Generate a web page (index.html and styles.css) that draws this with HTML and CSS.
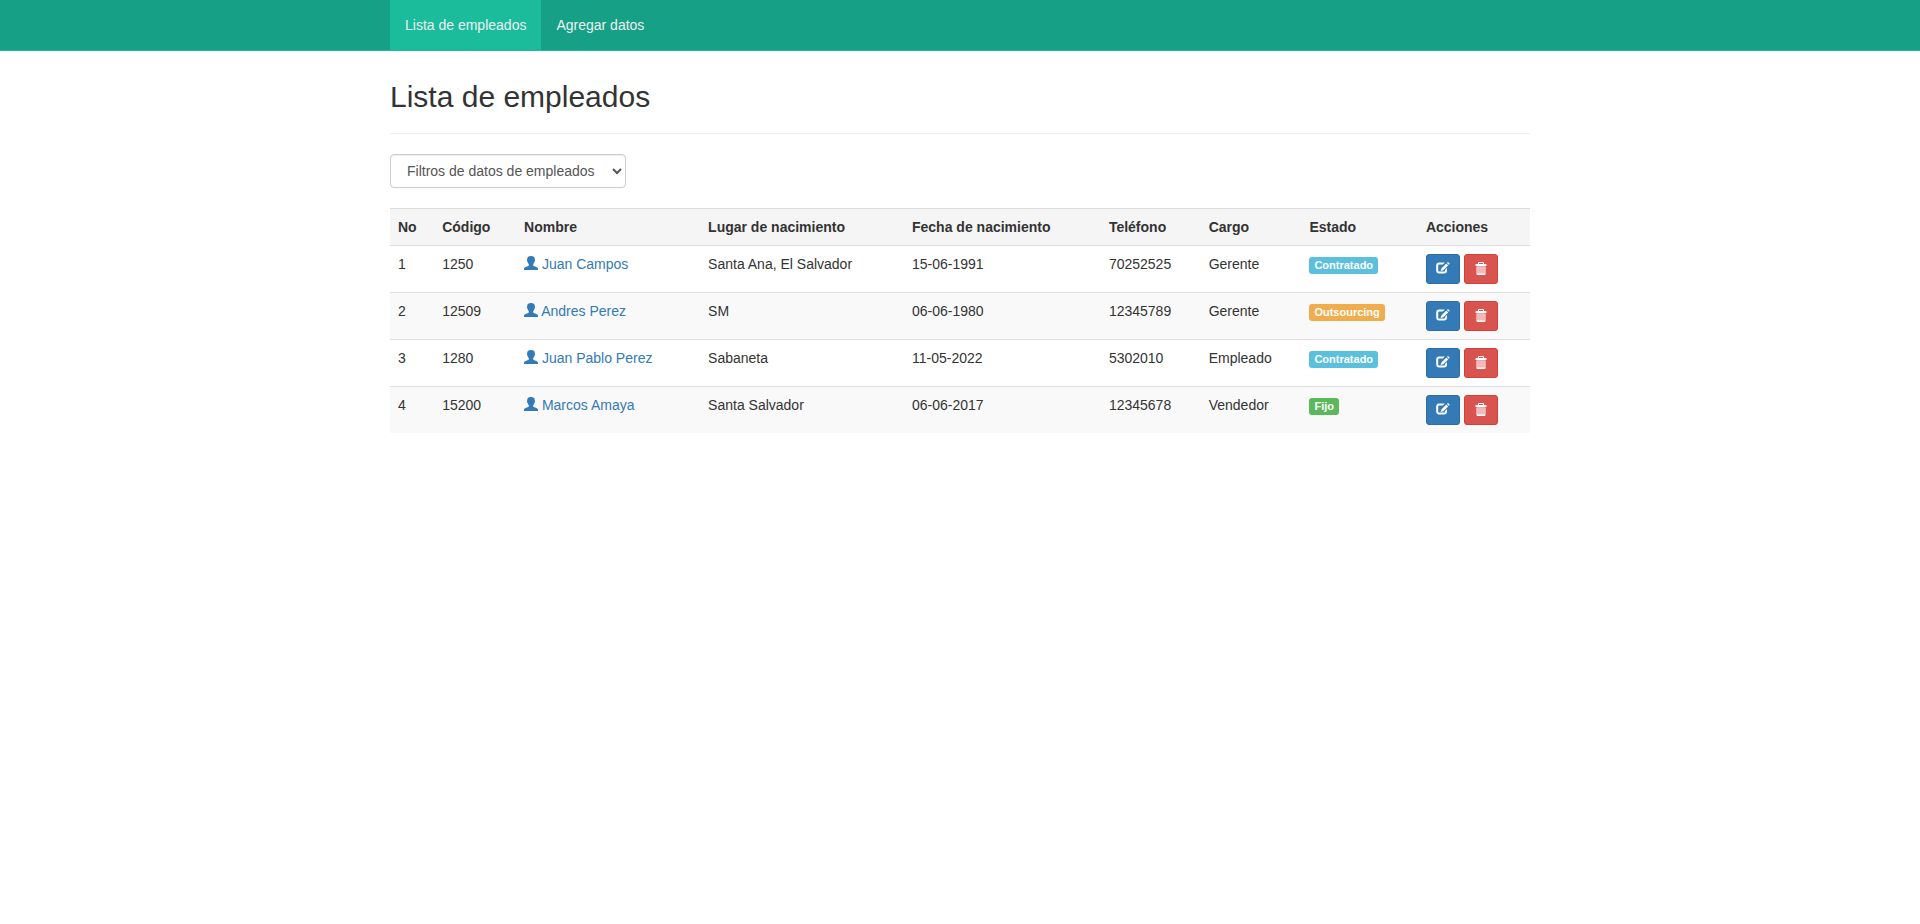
FILE: index.html
```html
<!DOCTYPE html>
<html lang="es">
<head>
<meta charset="utf-8">
<meta name="viewport" content="width=device-width, initial-scale=1">
<title>Lista de empleados</title>
<link rel="stylesheet" href="styles.css">
</head>
<body>
<svg class="sprite" aria-hidden="true">
  <symbol id="user" viewBox="0 0 14 14">
    <path d="M7 0C4.500 0 3.200 1.200 3.200 3.200c0 .6-.3.9-.2 1.500.1.7.5.8.6 1.300.2.900.6 1.500 1.200 2v1.500c-.2.5-.9.8-1.900 1.100C1.200 11.100 0 11.700 0 12.800V14h14v-1.200c0-1.100-1.200-1.700-2.900-2.200-1-.3-1.700-.6-1.900-1.100V8c.6-.5 1-1.100 1.200-2 .1-.5.5-.6.6-1.300.1-.6-.2-.9-.2-1.500C10.800 1.200 9.500 0 7 0z"/>
  </symbol>
  <symbol id="edit" viewBox="0 0 14 12">
    <path d="M8.800.5H3.200A3 3 0 0 0 .2 3.500v5a3 3 0 0 0 3 3H8a3 3 0 0 0 3-3V6L9 8v.7c0 .5-.4.9-.9.9H3.100c-.5 0-.9-.4-.9-.9V3.400c0-.5.4-.9.900-.9h3.700z"/>
    <path d="M12 0 13.800 1.800 12.800 2.800 11 1zM10.300 1.600 12.200 3.500 7.300 8.300 4.600 9.100 5.400 6.400z"/>
  </symbol>
  <symbol id="trash" viewBox="0 0 12 13">
    <path fill-rule="evenodd" d="M4 0h4a1 1 0 0 1 1 1v1h2a.5.5 0 0 1 .5.5V4H.5V2.500A.5.5 0 0 1 1 2h2V1a1 1 0 0 1 1-1zM4 1v1h4V1z"/>
    <path fill-rule="evenodd" d="M1.500 4.500h9V12a1 1 0 0 1-1 1h-7a1 1 0 0 1-1-1zM2.600 5v6.500h.8V5zM4.600 5v6.500h.8V5zM6.600 5v6.500h.8V5zM8.600 5v6.500h.8V5z"/>
  </symbol>
</svg>

<nav class="navbar">
  <div class="container">
    <ul class="nav">
      <li><a class="nav-link active" href="#lista">Lista de empleados</a></li>
      <li><a class="nav-link" href="#agregar">Agregar datos</a></li>
    </ul>
  </div>
</nav>

<main class="container content">
  <h2>Lista de empleados</h2>
  <hr>
  <form class="filter">
    <select class="form-control" aria-label="Filtros de datos de empleados">
      <option>Filtros de datos de empleados</option>
    </select>
  </form>
  <table class="table">
    <thead>
      <tr><th>No</th><th>Código</th><th>Nombre</th><th>Lugar de nacimiento</th><th>Fecha de nacimiento</th><th>Teléfono</th><th>Cargo</th><th>Estado</th><th>Acciones</th></tr>
    </thead>
    <tbody>
      <tr>
        <td>1</td><td>1250</td>
        <td><a href="#1250"><svg class="icon-user"><use href="#user"/></svg> Juan Campos</a></td>
        <td>Santa Ana, El Salvador</td><td>15-06-1991</td><td>70252525</td><td>Gerente</td>
        <td><span class="label info">Contratado</span></td>
        <td>
          <button class="btn primary" type="button" aria-label="Editar"><svg class="icon-edit"><use href="#edit"/></svg></button>
          <button class="btn danger" type="button" aria-label="Eliminar"><svg class="icon-trash"><use href="#trash"/></svg></button>
        </td>
      </tr>
      <tr>
        <td>2</td><td>12509</td>
        <td><a href="#12509"><svg class="icon-user"><use href="#user"/></svg> Andres Perez</a></td>
        <td>SM</td><td>06-06-1980</td><td>12345789</td><td>Gerente</td>
        <td><span class="label warning">Outsourcing</span></td>
        <td>
          <button class="btn primary" type="button" aria-label="Editar"><svg class="icon-edit"><use href="#edit"/></svg></button>
          <button class="btn danger" type="button" aria-label="Eliminar"><svg class="icon-trash"><use href="#trash"/></svg></button>
        </td>
      </tr>
      <tr>
        <td>3</td><td>1280</td>
        <td><a href="#1280"><svg class="icon-user"><use href="#user"/></svg> Juan Pablo Perez</a></td>
        <td>Sabaneta</td><td>11-05-2022</td><td>5302010</td><td>Empleado</td>
        <td><span class="label info">Contratado</span></td>
        <td>
          <button class="btn primary" type="button" aria-label="Editar"><svg class="icon-edit"><use href="#edit"/></svg></button>
          <button class="btn danger" type="button" aria-label="Eliminar"><svg class="icon-trash"><use href="#trash"/></svg></button>
        </td>
      </tr>
      <tr>
        <td>4</td><td>15200</td>
        <td><a href="#15200"><svg class="icon-user"><use href="#user"/></svg> Marcos Amaya</a></td>
        <td>Santa Salvador</td><td>06-06-2017</td><td>12345678</td><td>Vendedor</td>
        <td><span class="label success">Fijo</span></td>
        <td>
          <button class="btn primary" type="button" aria-label="Editar"><svg class="icon-edit"><use href="#edit"/></svg></button>
          <button class="btn danger" type="button" aria-label="Eliminar"><svg class="icon-trash"><use href="#trash"/></svg></button>
        </td>
      </tr>
    </tbody>
  </table>
</main>
</body>
</html>
```

FILE: styles.css
```css
* {
  box-sizing: border-box;
}

body {
  margin: 0;
  background: #fff;
  color: #333;
  font: 14px/20px "Liberation Sans", Arial, sans-serif;
}

.sprite {
  display: none;
}

.container {
  max-width: 1170px;
  margin: 0 auto;
  padding: 0 15px;
}

.navbar {
  background: #16a085;
  border-bottom: 1px solid #1abc9c;
}

.nav {
  display: flex;
  margin: 0;
  padding: 0;
  list-style: none;
}

.nav-link {
  display: block;
  padding: 15px;
  color: #ecf0f1;
  text-decoration: none;
}

.nav-link.active {
  background: #1abc9c;
}

.content {
  padding-top: 29px;
}

h2 {
  margin: 0;
  font-size: 30px;
  line-height: 33px;
  font-weight: 500;
}

hr {
  margin: 20px 0;
  border: 0;
  border-top: 1px solid #eee;
}

.filter {
  display: flex;
  margin-bottom: 20px;
}

.form-control {
  width: 236px;
  height: 34px;
  padding: 6px 0 6px 12px;
  border: 1px solid #ccc;
  border-radius: 4px;
  background-color: #fff;
  box-shadow: inset 0 1px 1px rgba(0, 0, 0, 0.075);
  color: #555;
  font: inherit;
}

.table {
  width: 100%;
  border-collapse: collapse;
}

.table th,
.table td {
  padding: 8px;
  border-top: 1px solid #ddd;
  text-align: left;
  vertical-align: top;
}

.table th {
  background: #f5f5f5;
}

.table tbody tr:nth-child(even) {
  background: #f9f9f9;
}

.table a {
  color: #337ab7;
  text-decoration: none;
}

svg {
  fill: currentColor;
}

.icon-user {
  width: 14px;
  height: 14px;
  vertical-align: -1px;
}

.icon-edit {
  width: 14px;
  height: 12px;
}

.icon-trash {
  width: 12px;
  height: 13px;
}

.label {
  padding: 2px 5px 3px;
  border-radius: 3px;
  color: #fff;
  font-size: 11px;
  font-weight: 700;
  line-height: 1;
  white-space: nowrap;
}

.info {
  background: #5bc0de;
}

.warning {
  background: #f0ad4e;
}

.success {
  background: #5cb85c;
}

.btn {
  display: inline-flex;
  align-items: center;
  justify-content: center;
  width: 34px;
  height: 30px;
  padding: 0 0 2px;
  border: 1px solid;
  border-radius: 3px;
  color: #fff;
  vertical-align: middle;
}

.primary {
  background: #337ab7;
  border-color: #2e6da4;
}

.danger {
  background: #d9534f;
  border-color: #d43f3a;
}
```
